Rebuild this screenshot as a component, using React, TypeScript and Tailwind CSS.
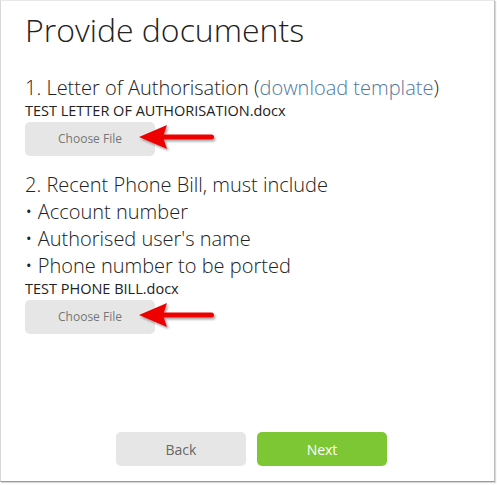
import React from 'react';

const Arrow = () => (
  <svg
    className="pointer-events-none absolute left-[112px] top-1/2 -translate-y-1/2"
    width="84"
    height="36"
    viewBox="0 0 84 36"
  >
    <defs>
      <filter id="sh" x="-20%" y="-40%" width="140%" height="180%">
        <feDropShadow dx="1.5" dy="2" stdDeviation="1.2" floodColor="#000" floodOpacity="0.35" />
      </filter>
    </defs>
    <g filter="url(#sh)">
      <polygon points="2,16 30,4 26,16 30,28" fill="#ee0000" />
      <rect x="24" y="13.5" width="53" height="5" rx="2.5" fill="#ee0000" />
    </g>
  </svg>
);

const FileInput = ({ name }: { name: string }) => (
  <div>
    <div className="text-[14.5px] leading-[20px] text-[#222]">{name}</div>
    <div className="relative mt-[1px] h-[34px]">
      <button className="h-[34px] w-[130px] rounded-[5px] bg-[#e6e6e6] text-[12px] text-[#777]">
        Choose File
      </button>
      <Arrow />
    </div>
  </div>
);

export default function App() {
  return (
    <div className="h-[485px] w-[497px] bg-white" style={{ fontFamily: '"Open Sans", sans-serif' }}>
      <div className="flex h-[482px] w-[495px] flex-col border border-t-[#e8e8e8] border-l-[#d8d8d8] border-r-[#bdbdbd] border-b-[#9a9a9a] px-[24px] shadow-[1px_1px_1px_rgba(0,0,0,0.15)]">
        <h1 className="mt-[7px] text-[32px] font-light leading-[44px] text-[#222]">Provide documents</h1>

        <div className="mt-[22px] text-[20px] font-light leading-[27px] text-[#222]">
          1. Letter of Authorisation (<a className="text-[#52779f]">download template</a>)
        </div>
        <FileInput name="TEST LETTER OF AUTHORISATION.docx" />

        <div className="mt-[15px] text-[20px] font-light leading-[27px] text-[#222]">
          <div>2. Recent Phone Bill, must include</div>
          <div>• Account number</div>
          <div>• Authorised user's name</div>
          <div>• Phone number to be ported</div>
        </div>
        <FileInput name="TEST PHONE BILL.docx" />

        <div className="mt-auto mb-[15px] ml-[8px] flex justify-center gap-[11px]">
          <button className="h-[34px] w-[130px] rounded-[5px] bg-[#e6e6e6] text-[14px] text-[#666]">Back</button>
          <button className="h-[34px] w-[130px] rounded-[5px] bg-[#7dc734] text-[14px] text-white">Next</button>
        </div>
      </div>
    </div>
  );
}
